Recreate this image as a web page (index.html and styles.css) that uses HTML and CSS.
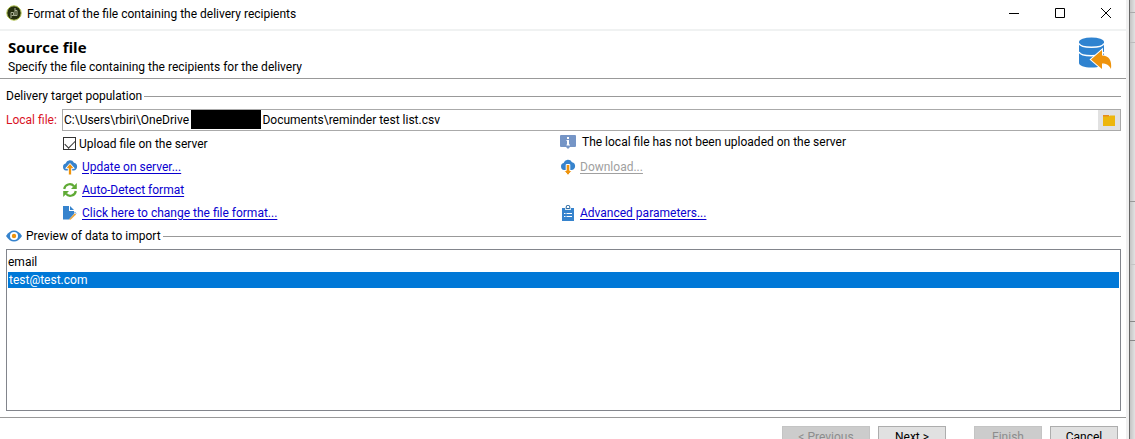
FILE: index.html
```html
<!DOCTYPE html>
<html lang="en">
<head>
<meta charset="utf-8">
<title>Format of the file containing the delivery recipients</title>
<link rel="stylesheet" href="styles.css">
</head>
<body>
<div class="screen">
  <main class="dialog">
    <div class="titlebar">
      <svg class="app-icon" viewBox="0 0 16 16" aria-hidden="true">
        <circle cx="8" cy="8" r="7.2" fill="#26300f" stroke="#b5c653" stroke-width="1"/>
        <path d="M5 13V7.500h2.500v3H5.500M9 3v7.500H7.500M9 5.500h2V10.500H9" fill="none" stroke="#a9b094" stroke-width="1"/>
      </svg>
      <span class="window-title">Format of the file containing the delivery recipients</span>
      <div class="window-controls">
        <button type="button" aria-label="Minimize"><svg viewBox="0 0 12 12"><path d="M1 6.500h10"/></svg></button>
        <button type="button" aria-label="Maximize"><svg viewBox="0 0 12 12"><path d="M1.500 1.500h9v9h-9z"/></svg></button>
        <button type="button" aria-label="Close"><svg viewBox="0 0 12 12"><path d="M1 1l10 10M11 1L1 11"/></svg></button>
      </div>
    </div>

    <header class="page-header">
      <div>
        <h1>Source file</h1>
        <p>Specify the file containing the recipients for the delivery</p>
      </div>
      <svg class="header-icon" viewBox="0 0 34 34" aria-hidden="true">
        <path d="M1 6v21c0 2.400 5 4.500 12.500 4.500S26 29.400 26 27V6z" fill="#2f83d0"/>
        <ellipse cx="13.500" cy="6" rx="12.500" ry="4.500" fill="#2f83d0"/>
        <path d="M1 7.500c2 5 23 5 25 0M1 16c2 5 23 5 25 0" fill="none" stroke="#fff" stroke-width="1.500"/>
        <path d="M13 23.500L24 14v5.500c7 0 10 5 9 13.500-2-4-4.500-5.500-9-5.500V33z" fill="#ee930c" stroke="#fff" stroke-width="2" paint-order="stroke"/>
      </svg>
    </header>

    <form class="content">
      <h2 class="group-title">Delivery target population</h2>

      <div class="file-row">
        <label for="local-file">Local file:</label>
        <div class="file-field">
          <input id="local-file" type="text" value="C:\Users\rbiri\OneDrive&emsp;&emsp;&emsp;&emsp;&emsp;&emsp;Documents\reminder test list.csv">
          <span class="redaction"></span>
          <button type="button" aria-label="Browse">
            <svg viewBox="0 0 14 12" aria-hidden="true"><path d="M1 1h6v2H1z" fill="#e68a1c"/><path d="M1 2.500h5.500L8 1.500h5V12H1z" fill="#edb60b"/></svg>
          </button>
        </div>
      </div>

      <div class="options">
        <div class="column">
          <label class="check"><input type="checkbox" checked>Upload file on the server</label>
          <div class="action">
            <svg viewBox="0 0 16 16" aria-hidden="true">
              <path d="M4 11.500a3.600 3.600 0 0 1-.4-7A4.600 4.600 0 0 1 12 3.700a4 4 0 0 1 0 7.800z" fill="#3683cd"/>
              <path d="M8 4.500l4.300 4.800H9.700V16H6.300V9.300H3.700z" fill="#ee930c" stroke="#fff" stroke-width="1"/>
            </svg>
            <a href="#">Update on server...</a>
          </div>
          <div class="action">
            <svg viewBox="0 0 16 16" aria-hidden="true">
              <path d="M2.200 7a5.600 5.600 0 0 1 9.800-2.800M13.800 9A5.600 5.600 0 0 1 4 11.800" fill="none" stroke="#5faa35" stroke-width="2.200"/>
              <path d="M14.800 1v6H9zM1.200 15V9H7z" fill="#5faa35"/>
            </svg>
            <a href="#">Auto-Detect format</a>
          </div>
          <div class="action">
            <svg viewBox="0 0 16 16" aria-hidden="true">
              <path d="M1 1h6v5h5v3l-5 5.500H1z" fill="#3683cd"/>
              <path d="M8 1l4 4H8z" fill="#3683cd"/>
              <path d="M7 14.500L12.800 8.200l1.300 1.300-5.600 5.300z" fill="#eda53b"/>
              <path d="M12.300 6.800l1.700 1.700" stroke="#3683cd" stroke-width="1"/>
            </svg>
            <a href="#">Click here to change the file format...</a>
          </div>
        </div>
        <div class="column">
          <div class="status">
            <svg viewBox="0 0 16 16" aria-hidden="true">
              <path d="M1 1h14q1 0 1 1v10q0 1-1 1h-5l-2 2-2-2H1q-1 0-1-1V2q0-1 1-1z" fill="#7595c6"/>
              <path d="M7 3h2v2H7zM6.500 6H9v4.500h1V11.500H6.500v-1H7V7h-.500z" fill="#fff"/>
            </svg>
            <span>The local file has not been uploaded on the server</span>
          </div>
          <div class="action">
            <svg viewBox="0 0 16 16" aria-hidden="true">
              <path d="M4 11a3.600 3.600 0 0 1-.4-7A4.600 4.600 0 0 1 12 3.200 4 4 0 0 1 12 11z" fill="#3683cd"/>
              <path d="M8 16.500l4-5H9.800V5.500H6.200v6H4z" fill="#ee930c" stroke="#fff" stroke-width="1"/>
            </svg>
            <a class="disabled" aria-disabled="true" href="#">Download...</a>
          </div>
          <div class="action action-last">
            <svg viewBox="0 0 16 16" aria-hidden="true">
              <path d="M2 3h12v13H2z" fill="#3683cd"/>
              <path d="M5 3h6v2H5z" fill="#dcecf8"/>
              <path d="M6.200 3.500V2a1.800 1.800 0 0 1 3.600 0v1.500z" fill="#fff" stroke="#28679f" stroke-width="1"/>
              <path d="M4 8.500h1.500M6.500 8.500H12M4 11.500h1.500M6.500 11.500H12" stroke="#fff" stroke-width="1"/>
            </svg>
            <a href="#">Advanced parameters...</a>
          </div>
        </div>
      </div>

      <h2 class="group-title preview-title">
        <svg viewBox="0 0 16 16" aria-hidden="true">
          <path d="M0 8q3.500-5.500 8-5.500T16 8q-3.500 5.500-8 5.500T0 8z" fill="#3683cd"/>
          <circle cx="8" cy="8" r="4" fill="#fff"/>
          <circle cx="8" cy="8" r="2.200" fill="#ee930c"/>
        </svg>
        Preview of data to import
      </h2>

      <div class="preview">
        <table>
          <thead><tr><th scope="col">email</th></tr></thead>
          <tbody><tr class="selected"><td>test@test.com</td></tr></tbody>
        </table>
      </div>
    </form>

    <footer class="footer">
      <button type="button" class="wide" disabled>&lt; Previous</button>
      <button type="button">Next &gt;</button>
      <button type="button" class="spaced" disabled>Finish</button>
      <button type="button">Cancel</button>
    </footer>
  </main>
  <aside class="backdrop"></aside>
</div>
</body>
</html>
```
FILE: styles.css
```css
* {
  box-sizing: border-box;
}

body {
  margin: 0;
  overflow: hidden;
  background: #fff;
  color: #000;
  font: 12px/16px Roboto, "Noto Sans", sans-serif;
}

button,
input {
  font: inherit;
  color: inherit;
}

h1,
h2,
p {
  margin: 0;
}

svg {
  display: block;
  flex: none;
}

.screen {
  display: flex;
  height: 100vh;
}

.dialog {
  flex: 1;
  display: flex;
  flex-direction: column;
  min-width: 0;
  border-right: 3px solid #f0f0f0;
}

.backdrop {
  width: 6px;
  border-left: 1px solid #666;
  background:
    linear-gradient(#aaa, #aaa) 0 12px / 100% 1px no-repeat,
    linear-gradient(#bbb, #bbb) 0 42px / 100% 1px no-repeat,
    linear-gradient(#999, #999) 0 201px / 100% 1px no-repeat,
    linear-gradient(#c4c4c4, #c4c4c4) 0 264px / 100% 1px no-repeat,
    linear-gradient(#888, #888) 0 321px / 100% 1px no-repeat,
    linear-gradient(#888, #888) 0 340px / 100% 1px no-repeat,
    linear-gradient(90deg, #c4c4c4, #e2e2e2);
}

.titlebar {
  display: flex;
  align-items: center;
  height: 31px;
  padding: 0 0 4px 6px;
  border-bottom: 2px solid #f0f2f2;
}

.app-icon {
  width: 16px;
  height: 16px;
  margin-right: 5px;
}

.window-title {
  flex: 1;
  padding-top: 2px;
}

.window-controls {
  display: flex;
  margin-right: -3px;
}

.window-controls button {
  display: grid;
  place-items: center;
  width: 46px;
  height: 26px;
  padding: 0;
  border: 0;
  background: none;
}

.window-controls svg {
  width: 12px;
  height: 12px;
  fill: none;
  stroke: #000;
  stroke-width: 1;
}

.page-header {
  display: flex;
  justify-content: space-between;
  height: 48px;
  padding: 4px 14px 0 8px;
  border-bottom: 1px solid #999;
}

h1 {
  font: bold 15px/24px "Open Sans", "Noto Sans", sans-serif;
}

.header-icon {
  width: 34px;
  height: 34px;
  margin-top: 1px;
}

.content {
  flex: 1;
  display: flex;
  flex-direction: column;
  padding: 9px 5px 6px 6px;
}

.group-title {
  display: flex;
  align-items: center;
  font: inherit;
}

.group-title::after {
  content: "";
  flex: 1;
  height: 1px;
  margin-left: 2px;
  background: #999;
}

.file-row {
  display: flex;
  align-items: center;
  margin-top: 5px;
}

.file-row label {
  width: 56px;
  color: #d9131f;
}

.file-field {
  position: relative;
  flex: 1;
  display: flex;
  height: 22px;
  border: 1px solid #aaa;
}

.file-field input {
  flex: 1;
  min-width: 0;
  padding: 0 1px 1px;
  border: 0;
  outline: 0;
  background: #fff;
}

.file-field button {
  display: grid;
  place-items: center;
  width: 22px;
  padding: 0;
  border: 0;
  background: #e1e1e1;
}

.file-field button svg {
  width: 14px;
  height: 12px;
}

.redaction {
  position: absolute;
  top: 0;
  left: 128px;
  width: 70px;
  height: 19px;
  background: #000;
}

.options {
  display: grid;
  grid-template-columns: 498px 1fr;
  margin: 1px 0 0 56px;
}

.column {
  display: flex;
  flex-direction: column;
}

.check,
.action {
  display: flex;
  align-items: center;
  height: 23px;
}

.check {
  gap: 3px;
}

.check input {
  appearance: none;
  width: 13px;
  height: 13px;
  margin: 0 0 0 1px;
  border: 1px solid #333;
  background: #fff;
  display: grid;
  place-items: center;
}

.check input::after {
  content: "";
  width: 9px;
  height: 5px;
  border: solid #333;
  border-width: 0 0 1px 1px;
  transform: translateY(-1px) rotate(-45deg);
}

.action {
  gap: 4px;
}

.action svg,
.status svg,
.group-title svg {
  width: 16px;
  height: 16px;
}

.action-last {
  margin-top: 23px;
}

.status {
  display: flex;
  align-items: center;
  gap: 6px;
  height: 23px;
  padding-bottom: 3px;
}

a {
  color: #0a00d0;
  text-underline-offset: 2px;
}

a.disabled {
  color: #a0a0a0;
}

.preview-title {
  margin-top: 4px;
}

.preview-title svg {
  margin-right: 4px;
}

.preview {
  flex: 1;
  margin-top: 5px;
  padding: 1px;
  border: 1px solid #82858c;
}

table {
  width: 100%;
  border-collapse: collapse;
}

th,
td {
  padding: 0 0 0 1px;
  text-align: left;
  font-weight: normal;
}

th {
  padding: 3px 0 2px;
}

.selected {
  background: #0078d7;
  color: #fff;
}

.footer {
  display: flex;
  justify-content: flex-end;
  gap: 8px;
  height: 22px;
  padding: 8px 8px 0;
  border-top: 1px solid #999;
}

.footer button {
  flex: none;
  width: 68px;
  height: 22px;
  padding: 0;
  border: 1px solid #adadad;
  background: #e1e1e1;
}

.footer button:disabled {
  border-color: #c4c4c4;
  background: #ccc;
  color: #8c8c8c;
}

.footer .wide {
  width: 88px;
}

.footer .spaced {
  margin-left: 20px;
}
```
